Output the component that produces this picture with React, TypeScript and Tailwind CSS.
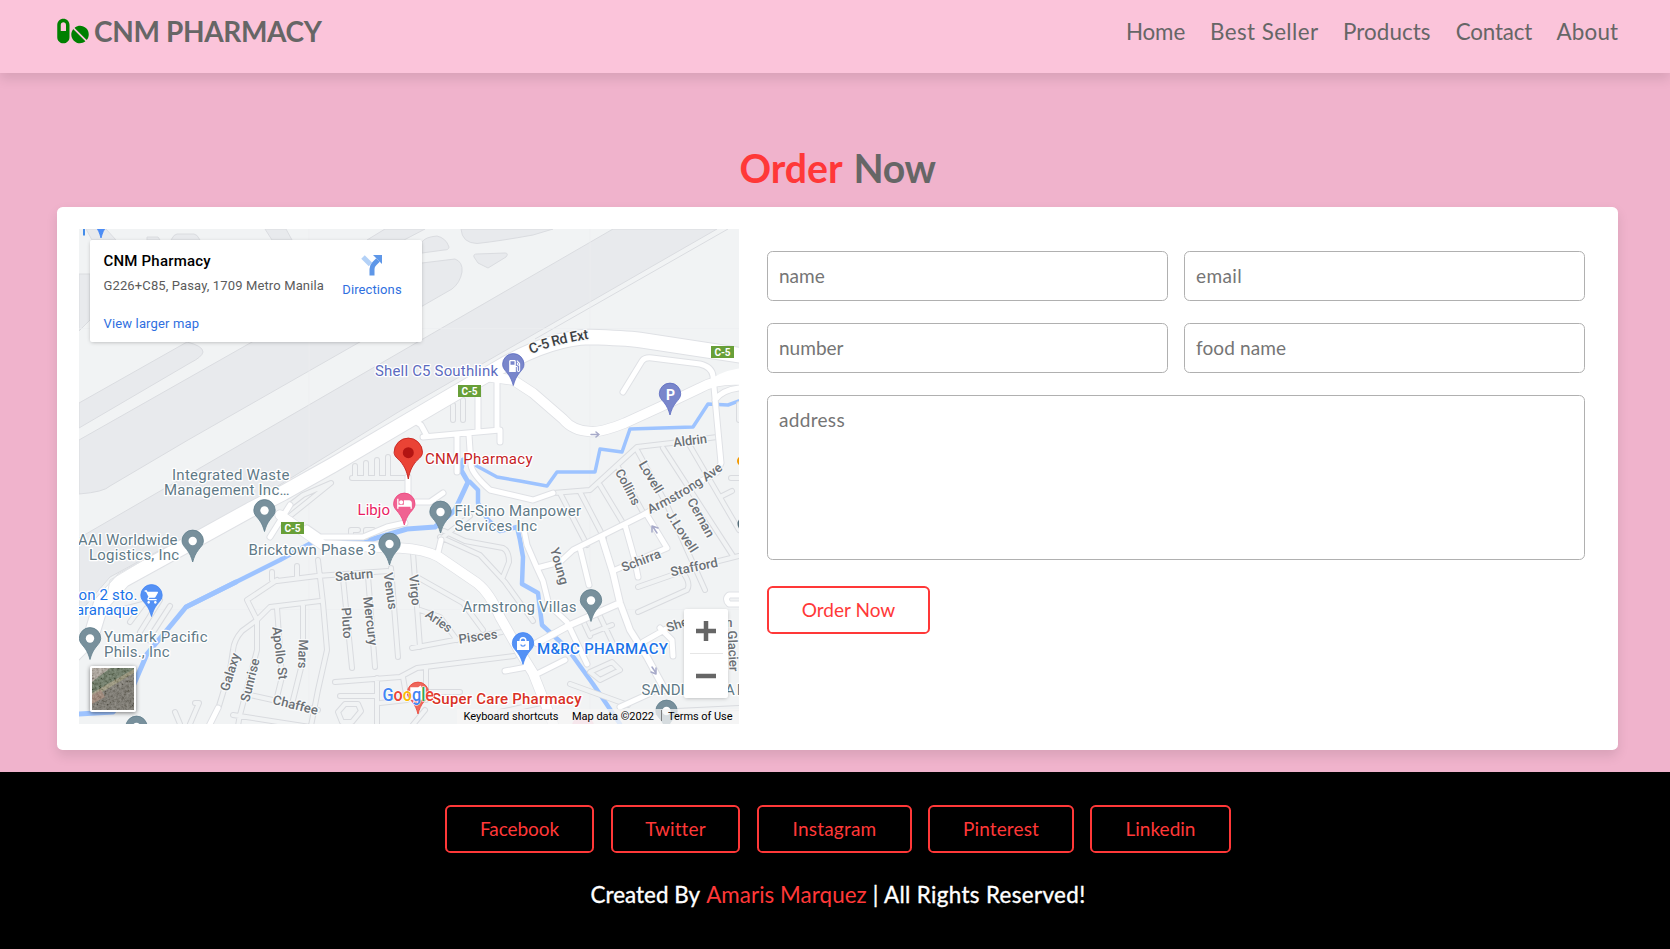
import { FaPills } from "react-icons/fa";
import { MdLocalGasStation, MdShoppingCart, MdHotel } from "react-icons/md";

const NAV = [
  { label: "Home", cls: "w-[61.8px] tracking-[-0.1px]" },
  { label: "Best Seller", cls: "w-[110.6px] tracking-[0.4px]" },
  { label: "Products", cls: "w-[90.2px] tracking-[0.05px]" },
  { label: "Contact", cls: "w-[78.6px] tracking-[-0.15px]" },
  { label: "About", cls: "w-[62.4px] tracking-[0.15px]" },
];

const SOCIAL = [
  { label: "Facebook", cls: "w-[149px] mr-[17px] tracking-[-0.1px]" },
  { label: "Twitter", cls: "w-[129px] mr-[17px] tracking-[0.1px]" },
  { label: "Instagram", cls: "w-[155px] mr-4 tracking-[0.2px]" },
  { label: "Pinterest", cls: "w-[146px] mr-4 tracking-[0.1px]" },
  { label: "Linkedin", cls: "w-[141px]" },
];

/* Zones of the airport */
const AIRPORT = [
  "M79 403 L187 342 Q203 346 203 352 Q202 357 190 363 L79 428Z",
  "M79 440 L252 342 L340 290 L422 263 L455 259 Q463 262 462 272 Q460 283 452 289 L358 343 L188 440 L110 486 Q104 492 79 494Z",
  "M79 538 L613 229 H717 L522 341 L400 411 L247 505 L147 557 L110 577 L79 613Z",
  "M461 229 Q462 243 477 243.500 Q500 241 533 235 L553 229Z",
  "M474 257 Q473 254 477 254 L505 253 Q509 253 506 257 L488 268 L478 263Z",
  "M422 242 Q425 237 437 236 Q446 238 449 247 Q449 250 444 250 L422 253Z",
  "M367 240 L385 229 H425 L404 240Z",
  "M265 229 L272 240 H292 L286 229Z",
  "M79 274 H90 V320 L79 331Z",
  "M147 240 V237 H158 L160 240Z",
  "M171 240 Q174 234 177 234 H194 Q197 234 200 240Z",
  "M86 229 H106 L116 240 H92Z",
];

/* Minor streets */
const STREETS = [
  "M280 558 M277 580 L247 600 L257 620 L242 631 Q234 640 233 650 L230 670 L219 706",
  "M272 580 V572 M297 578 V566 M277 581 L317 576 L388 571",
  "M257 620 L270 607 L320 601 M257 620 V650 L240 715",
  "M318 560 L323 603 L327 650 L318 690 L311 726",
  "M277 608 L282 677 L277 697 M303 604 V660 L293 700",
  "M250 695 L318 710 M233 715 L310 727 M240 714 L238 726",
  "M343 578 L352 668 M368 576 L375 667 M391 568 L398 657",
  "M413 553 L420 647 M412 648 L460 639 L502 632 M420 610 L440 617 L457 640",
  "M417 577 L463 603 L483 630",
  "M335 682 L400 677 L417 668 L514 656 M340 696 H377 M377 678 V726",
  "M403 677 L407 700 L380 703 M426 668 V700 M430 692 H460 M425 710 L412 726",
  "M338 712 L345 704 H358 L361 711 L352 722 H342Z",
  "M440 537 L480 555 L505 582 L533 621 M444 531 L465 541 L503 548 Q509 551 509 562 L503 577",
  "M437 553 L443 537 L470 516",
  "M553 493 L590 490 L637 447 L680 442 L717 437",
  "M560 493 L587 545 M580 492 L604 538 M600 485 L626 528",
  "M618 467 L644 514 M637 450 L667 505 M663 448 L733 556 M690 446 L739 530",
  "M667 505 L705 590 M739 556 L695 567 L638 587",
  "M638 612 L687 590 Q691 584 684 574",
  "M720 497 L732 491 M739 478 H731",
  "M592 633 L612 625 M597 610 L617 652 M583 621 L590 636",
  "M590 672 L612 662 L620 670 L600 680Z M570 684 L628 705",
  "M285 520 L331 483 L303 495 L290 505",
  "M352 478 H404 M355 466 V478 M366 463 V478 M377 460 V478 M388 457 V478",
  "M351 537 V530 H358 M366 537 V530 H373",
  "M453 405 V420 M463 400 V420",
  "M140 632 L160 600 M148 640 L170 606 M130 622 L150 595 M120 610 L158 600",
  "M195 703 H199 L190 724 M175 712 L180 724",
  "M656 712 L739 708 M500 712 L545 702",
  "M739 420 V404",
];

/* Streets filled in white */
const ROADS = [
  "M423 437 L500 430 V442 M478 390 V430 M497 382 V430",
  "M408 416 L421 425 L427 436",
  "M457 435 V472",
  "M307 528 L320 537 H363 L387 527 L405 523",
  "M408 477 V496 M408 502 H430 L443 493",
  "M437 557 L441 540",
  "M469 435 L471 465 Q472 474 490 490 L533 500 L553 493",
  "M623 392 L642 361 Q645 357 652 358 L700 364 Q712 367 713 376 L717 420 L721 463 L717 472",
  "M717 472 L643 515 L573 550 L560 562 L537 568",
  "M523 525 L527 545 L537 568 L543 581 L549 605 L567 622 L587 664",
  "M580 548 L589 585 M625 525 L634 557 L638 577",
  "M615 570 L667 548 L647 515",
  "M643 642 L666 629 M660 628 L672 640 L673 656",
  "M620 707 L653 692 M505 671 L527 667 M537 674 L565 660",
  "M739 595 H729 Q724 599 729 604 H739",
  "M218 708 L208 728",
  "M713 383 L739 374 M715 400 Q722 390 739 388",
  "M290 505 L270 537",
];

const MAIN_ROAD = "M70 658 L91 637 L101 604 L123 580 L183 547 L250 510 L283 493 L333 465 L430 408 L500 367 Q550 338 590 337 Q625 338 640 340 L745 356";
const RAMP = "M490 377 L513 380 L533 393 L563 419 Q573 431 590 431.500 Q600 433 625 423 L660 407 L700 388 Q715 379 739 380";
const SOUTH_ROAD = "M280 515 L323 545 L400 548 Q424 549 439 557 L477 583 Q490 593 500 617 L520 652 L533 673 L554 726";
const EAST_ROAD = "M602 538 L613 573 L620 603 L630 630 L647 657 L665 690 M537 643 L570 625 L620 603";

const RIVERS = [
  { d: "M739 401 L728 405 L708 404 L693 427 L630 429 L622 452 L600 449 L595 472 L557 472 L547 486 L520 481 L497 477 L475 465", w: 3.5 },
  { d: "M463 460 L461 470 L468 482 L455 510 L435 527 L407 529 L373 539 L320 541", w: 5 },
  { d: "M322 537 L280 560 L236 582 L186 607", w: 4.5 },
  { d: "M236 582 L186 607 L167 630 L147 654 L134 684 L113 712 L79 714", w: 5 },
  { d: "M470 482 L478 490 L478 503 L488 520 L500 531 L517 527 L520 540 L523 557 L522 584 L538 593 L542 625 L567 648 L593 684 L620 724", w: 4.5 },
];

type Label = { t: string; x: number; y: number; w: number; c?: string; b?: boolean };
const SLATE = "#5f7a87";
const PLACES: Label[] = [
  { t: "Shell C5 Southlink", x: 375, y: 376, w: 123, c: "#5c6bc0" },
  { t: "CNM Pharmacy", x: 425, y: 464, w: 107.5, c: "#c5221f" },
  { t: "Libjo", x: 357.5, y: 514.5, w: 32.5, c: "#e91e63" },
  { t: "Fil-Sino Manpower", x: 454.5, y: 515.5, w: 126.5 },
  { t: "Services Inc", x: 454.5, y: 531, w: 82.5 },
  { t: "Bricktown Phase 3", x: 248.5, y: 555, w: 127.5 },
  { t: "Integrated Waste", x: 172, y: 480, w: 117.5 },
  { t: "Management Inc…", x: 164, y: 495, w: 125.5 },
  { t: "AAI Worldwide", x: 78, y: 545, w: 99.5 },
  { t: "Logistics, Inc", x: 89, y: 560, w: 90 },
  { t: "on 2 sto.", x: 78.5, y: 600, w: 59, c: "#1a73e8" },
  { t: "aranaque", x: 76, y: 615, w: 62, c: "#1a73e8" },
  { t: "Yumark Pacific", x: 104, y: 642, w: 103.5 },
  { t: "Phils., Inc", x: 104, y: 657, w: 65.5 },
  { t: "Armstrong Villas", x: 462.5, y: 611.5, w: 114 },
  { t: "M&RC PHARMACY", x: 537, y: 654, w: 131, c: "#1a73e8", b: true },
  { t: "Super Care Pharmacy", x: 432, y: 703.5, w: 149.5, c: "#d93025", b: true },
  { t: "SANDI", x: 641.5, y: 695, w: 43 },
  { t: "AR", x: 725, y: 695, w: 21 },
];

const STREET_NAMES = [
  { t: "Aldrin", x: 690, y: 440.5, r: -7, w: 34 },
  { t: "Collins", x: 628, y: 487, r: 62, w: 39 },
  { t: "Lovell", x: 651, y: 477, r: 59, w: 35 },
  { t: "Cernan", x: 701, y: 517.5, r: 61, w: 43 },
  { t: "J.Lovell", x: 682, y: 531.5, r: 57, w: 47 },
  { t: "Schirra", x: 641, y: 560.5, r: -21, w: 41 },
  { t: "Stafford", x: 694, y: 567, r: -12, w: 48 },
  { t: "Young", x: 559.5, y: 566, r: 74, w: 38 },
  { t: "Virgo", x: 415, y: 590, r: 84, w: 31 },
  { t: "Aries", x: 439, y: 621, r: 35, w: 29 },
  { t: "Pisces", x: 478, y: 636.5, r: -8, w: 39 },
  { t: "Venus", x: 390.5, y: 591, r: 82, w: 37 },
  { t: "Mercury", x: 370.5, y: 621, r: 83, w: 49 },
  { t: "Pluto", x: 347, y: 623, r: 86, w: 31 },
  { t: "Saturn", x: 354, y: 575, r: -5, w: 38 },
  { t: "Apollo St", x: 280, y: 653, r: 83, w: 53 },
  { t: "Mars", x: 303, y: 654, r: 92, w: 29 },
  { t: "Galaxy", x: 230, y: 672, r: -73, w: 39 },
  { t: "Sunrise", x: 250, y: 680, r: -76, w: 44 },
  { t: "Chaffee", x: 295.5, y: 705, r: 14, w: 46 },
  { t: "She", x: 677, y: 624.5, r: -18, w: 22 },
  { t: "n", x: 729, y: 622, r: 0, w: 7 },
  { t: "Glacier", x: 733, y: 651, r: 87, w: 41 },
];

function Pin({ x, y, fill, stroke, dot = true }: { x: number; y: number; fill: string; stroke: string; dot?: boolean }) {
  return (
    <g transform={`translate(${x} ${y})`}>
      <path
        d="M0 0 C-1.500 -5 -2.500 -8 -6 -12.500 C-8.500 -15.500 -10.700 -17.500 -10.700 -21.200 A10.700 10.700 0 0 1 10.700 -21.200 C10.700 -17.500 8.500 -15.500 6 -12.500 C2.500 -8 1.500 -5 0 0Z"
        fill={fill}
        stroke={stroke}
        strokeWidth="0.8"
      />
      {dot && <circle cy="-21" r="4.2" fill="#fff" />}
    </g>
  );
}

function Shield({ x, y }: { x: number; y: number }) {
  return (
    <g>
      <rect x={x} y={y} width="23" height="12" fill="#689f38" />
      <text x={x + 11.5} y={y + 9.5} textAnchor="middle" fontSize="10" fontWeight="700" fill="#fff" textLength="16">
        C-5
      </text>
    </g>
  );
}

function MapDrawing() {
  return (
    <svg viewBox="79 229 660 495" className="block h-[495px] w-[660px] font-['Roboto',sans-serif]">
      <rect x="79" y="229" width="660" height="495" fill="#f1f3f4" />
      <g fill="#e8eaed" stroke="#dadce0" strokeWidth="1">
        {AIRPORT.map((d) => <path key={d} d={d} />)}
      </g>
      <path d="M728 229 L535 339" fill="none" stroke="#dadce0" />
      <path d="M79 328.500 H739 M309 229 V724 M590 229 V724 M79 609.500 H739" stroke="#eceef0" strokeWidth="0.6" />
      <g fill="none" strokeLinejoin="round" strokeLinecap="round">
        {RIVERS.map((r) => <path key={r.d} d={r.d} stroke="#9dc3ff" strokeWidth={r.w} />)}
        <path d={STREETS.join(" ")} stroke="#d9dbdf" strokeWidth="6" />
        <path d={STREETS.join(" ")} stroke="#f1f3f4" strokeWidth="4" />
        <path d={ROADS.join(" ")} stroke="#dfe1e5" strokeWidth="7" />
        <path d={SOUTH_ROAD} stroke="#dfe1e5" strokeWidth="11" />
        <path d={EAST_ROAD} stroke="#dfe1e5" strokeWidth="8" />
        <path d={RAMP} stroke="#dfe1e5" strokeWidth="11" />
        <path d={MAIN_ROAD} stroke="#dfe1e5" strokeWidth="16.5" />
        <path d={ROADS.join(" ")} stroke="#fff" strokeWidth="5" />
        <path d={SOUTH_ROAD} stroke="#fff" strokeWidth="9.5" />
        <path d={EAST_ROAD} stroke="#fff" strokeWidth="6" />
        <path d={RAMP} stroke="#fff" strokeWidth="9.5" />
        <path d="M705 386 Q720 374 739 371" stroke="#fff" strokeWidth="5" />
        <path d={MAIN_ROAD} stroke="#fff" strokeWidth="14.5" />
        <path d="M106 600 L110 580 L150 556" stroke="#e3e5e8" strokeWidth="1" />
        <path d="M591 434.500 H599 M596 432 L599 434.500 L596 437 M657 533 L653 527 M652 532 V526 L658 528 M652 667 L656 673 M656 668 V674 L651 672" stroke="#a7aac9" strokeWidth="1.5" />
      </g>

      <g fill="#6b7075" fontSize="13" fontWeight="500" stroke="#f8f9fa" strokeWidth="2.5" strokeLinejoin="round" paintOrder="stroke">
        {STREET_NAMES.map((s) => (
          <text key={s.t} transform={`translate(${s.x} ${s.y}) rotate(${s.r})`} y="4.5" textAnchor="middle" textLength={s.w} lengthAdjust="spacingAndGlyphs">
            {s.t}
          </text>
        ))}
        <path id="ave" d="M650 514 Q694 493 726 467" fill="none" stroke="none" />
        <text><textPath href="#ave" textLength="86">Armstrong Ave</textPath></text>
        <path id="ext" d="M531 354 Q557 343 592 338.500" fill="none" stroke="none" />
        <text fill="#3c4043" fontSize="14"><textPath href="#ext" textLength="60">C-5 Rd Ext</textPath></text>
      </g>

      <Shield x={458} y={385} />
      <Shield x={711} y={346} />
      <Shield x={281} y={522} />

      <Pin x={440.5} y={533} fill="#78909c" stroke="#607d8b" />
      <Pin x={591} y={621.5} fill="#78909c" stroke="#607d8b" />
      <Pin x={264.5} y={531.5} fill="#78909c" stroke="#607d8b" />
      <Pin x={192.7} y={562} fill="#78909c" stroke="#607d8b" />
      <Pin x={90} y={659.5} fill="#78909c" stroke="#607d8b" />
      <Pin x={389.5} y={565} fill="#78909c" stroke="#607d8b" />
      <Pin x={136.5} y={748} fill="#78909c" stroke="#607d8b" />
      <Pin x={666.5} y={732} fill="#78909c" stroke="#607d8b" />
      <Pin x={583} y={748} fill="#f8bbd0" stroke="#f4a9c3" dot={false} />
      <Pin x={101} y={238} fill="#4c8df6" stroke="#4285f4" dot={false} />
      <Pin x={513.3} y={385.5} fill="#7986cb" stroke="#5c6bc0" dot={false} />
      <Pin x={670} y={415} fill="#7986cb" stroke="#5c6bc0" dot={false} />
      <Pin x={151.5} y={616.5} fill="#5491f5" stroke="#4285f4" dot={false} />
      <Pin x={523} y={664.5} fill="#5491f5" stroke="#4285f4" dot={false} />
      <Pin x={404.3} y={525} fill="#f06292" stroke="#ec407a" dot={false} />
      <Pin x={418} y={714} fill="#ee675c" stroke="#ea4335" dot={false} />
      <MdLocalGasStation x="506.5" y="358" width="14" height="14" color="#fff" />
      <MdShoppingCart x="144" y="589" width="15" height="15" color="#fff" />
      <MdHotel x="396.5" y="495.5" width="15.5" height="15.5" color="#fff" />
      <path d="M411 688 H425 V699 H411Z M421 686 L417 689" fill="#fff" stroke="#fff" strokeWidth="1.5" />
      <path d="M517 641 H529 V650 H517Z" fill="#fff" />
      <path d="M520.200 642 V640.500 A2.800 2.800 0 0 1 525.800 640.500 V642" fill="none" stroke="#fff" strokeWidth="1.4" />
      <path d="M520.700 644.500 A2.400 2.400 0 0 0 525.300 644.500" fill="none" stroke="#5491f5" strokeWidth="1.2" />
      <text x="670.5" y="400" textAnchor="middle" fontSize="14" fontWeight="700" fill="#fff">P</text>
      <path d="M84 229 V235.500" stroke="#1a73e8" strokeWidth="1.6" />
      <circle cx="742" cy="461" r="5" fill="#f29900" />
      <circle cx="745" cy="524" r="7.5" fill="#546e7a" />

      <path d="M408.300 479 C406.500 470 404.500 467 401 462 C397 458 394.100 456 394.100 452.300 A14.200 14.200 0 0 1 422.500 452.300 C422.500 456 419.500 458 415.500 462 C412 467 410 470 408.300 479Z" fill="#ea4335" stroke="#c5221f" strokeWidth="0.9" />
      <circle cx="408.3" cy="452.7" r="5.5" fill="#b31412" />

      <g fontSize="15" stroke="#fff" strokeWidth="2.6" strokeLinejoin="round" paintOrder="stroke">
        {PLACES.map((p) => (
          <text key={p.t} x={p.x} y={p.y} textLength={p.w} fill={p.c ?? SLATE} fontWeight={p.b ? 500 : 400}>
            {p.t}
          </text>
        ))}
      </g>
      <text x="382.5" y="700.5" fontSize="18" fontWeight="500" textLength="51.5" stroke="#fff" strokeWidth="1.2" paintOrder="stroke" lengthAdjust="spacingAndGlyphs">
        <tspan fill="#4285f4">G</tspan>
        <tspan fill="#ea4335">o</tspan>
        <tspan fill="#fbbc04">o</tspan>
        <tspan fill="#4285f4">g</tspan>
        <tspan fill="#34a853">l</tspan>
        <tspan fill="#ea4335">e</tspan>
      </text>

      <rect x="457" y="709" width="282" height="15" fill="#f5f5f5" fillOpacity="0.75" />
      <g fontSize="11" fill="#000">
        <text x="463.5" y="719.5" textLength="95">Keyboard shortcuts</text>
        <text x="572" y="719.5" textLength="82">Map data ©2022</text>
        <text x="668" y="719.5" textLength="64.5">Terms of Use</text>
      </g>
      <path d="M661.500 710 V721" stroke="#666" strokeWidth="0.8" />
    </svg>
  );
}

function Thumbnail() {
  return (
    <svg viewBox="0 0 42 42" className="h-[42px] w-[42px]">
      <defs>
        <filter id="grain" x="0" y="0" width="100%" height="100%">
          <feTurbulence type="fractalNoise" baseFrequency="0.4" numOctaves="3" seed="4" />
          <feColorMatrix values="1.4 0 0 0 -0.3  1.4 0 0 0 -0.3  1.4 0 0 0 -0.32  0 0 0 0 0.28" />
        </filter>
      </defs>
      <rect width="42" height="42" fill="#77736a" />
      <path d="M0 0 H24 L0 15Z" fill="#b0a79d" />
      <path d="M0 28 L42 4 V-6 H26 L0 14Z" fill="#5d6d55" />
      <path d="M0 25 L42 1 V5 L0 30Z" fill="#959072" />
      <path d="M0 33 L20 22 L42 14 V42 H0Z" fill="#6f6b62" />
      <path d="M0 27 L9 22 L13 29 L0 36Z" fill="#9a7d6c" />
      <rect width="42" height="42" filter="url(#grain)" />
    </svg>
  );
}

function MapPanel() {
  return (
    <div className="relative h-[495px] w-[660px] shrink-0 overflow-hidden">
      <MapDrawing />

      <div className="absolute left-[11px] top-[11px] flex h-[102px] w-[332px] justify-between rounded-[2px] bg-white pl-[13.5px] pr-[20px] font-['Roboto',sans-serif] shadow-[0_1px_4px_-1px_rgba(0,0,0,0.3)]">
        <div className="pt-[10px]">
          <p className="text-[15px] font-medium leading-[22px] tracking-[0.2px] text-black">CNM Pharmacy</p>
          <p className="mt-1 whitespace-nowrap text-[13px] leading-5 tracking-[0.13px] text-[#5b5b5b]">G226+C85, Pasay, 1709 Metro Manila</p>
          <a className="mt-[18px] block text-[13px] leading-5 tracking-[0.15px] text-[#2f6fe0]">View larger map</a>
        </div>
        <div className="flex w-[60px] flex-col items-center pt-[14px]">
          <svg viewBox="0 0 22 22" className="h-[22px] w-[22px]">
            <path d="M2 3 L9.500 10.500" stroke="#b3d1f7" strokeWidth="5" />
            <path d="M11 21.500 V15 Q11 12 13.500 9.500 L17 6" fill="none" stroke="#5e97e8" strokeWidth="5" />
            <path d="M12 1 H21 V10Z" fill="#5e97e8" />
          </svg>
          <a className="mt-[4px] text-[13px] leading-5 tracking-[0.1px] text-[#2f6fe0]">Directions</a>
        </div>
      </div>

      <div className="absolute bottom-[12px] left-[11px] rounded-[2px] border-2 border-white shadow-[0_1px_4px_rgba(0,0,0,0.5)]">
        <Thumbnail />
      </div>

      <div className="absolute bottom-[26px] right-[11px] flex h-[89px] w-[44px] flex-col items-center rounded-[2px] bg-white shadow-[0_1px_4px_-1px_rgba(0,0,0,0.3)]">
        <div className="flex h-[44px] items-center">
          <svg viewBox="0 0 20 20" className="h-5 w-5"><path d="M0 10 H20 M10 0 V20" stroke="#666" strokeWidth="4.5" /></svg>
        </div>
        <div className="h-px w-[33px] bg-[#e6e6e6]" />
        <div className="flex h-[44px] items-center">
          <svg viewBox="0 0 20 20" className="h-5 w-5"><path d="M0 10 H20" stroke="#666" strokeWidth="4.5" /></svg>
        </div>
      </div>
    </div>
  );
}

const FIELD = "h-[50px] w-[401px] rounded-[5.6px] border border-[#b0b0b0] px-[11px] pb-[2px] text-[19.04px] text-[#666] outline-none placeholder:text-[#757575]";
const BUTTON = "flex h-[48px] items-center justify-center rounded-[5.6px] border-2 border-[#ff3838] text-[19.04px] text-[#ff3838]";

export default function App() {
  return (
    <div className="flex h-[949px] w-[1670px] flex-col overflow-hidden bg-[#f0b3cc] font-['Lato',sans-serif]">
      <header className="relative flex h-[73px] shrink-0 justify-between bg-[#fbc4da] pl-[57px] pr-[51px] shadow-[0_5.600px_11.200px_rgba(0,0,0,0.1)]">
        <a className="flex h-[62px] items-center text-[28px] font-bold tracking-[-0.35px] text-[#666]">
          <FaPills className="mr-[5px] h-[28px] w-[32px] text-[#008000]" />
          CNM PHARMACY
        </a>
        <nav className="flex h-[63px] items-center gap-[22.4px]">
          {NAV.map((n) => (
            <a key={n.label} className={`whitespace-nowrap text-[22.4px] text-[#666] ${n.cls}`}>{n.label}</a>
          ))}
        </nav>
      </header>

      <main className="flex h-[699px] shrink-0 flex-col items-center pl-[5px]">
        <h1 className="mt-[71px] flex h-[48px] items-center gap-[11px] text-[39.2px] font-bold text-[#666]">
          <span className="text-[#ff3838]">Order</span>
          <span className="tracking-[-0.4px]">Now</span>
        </h1>
        <section className="mt-[15px] flex h-[543px] w-[1561px] rounded-[5.6px] bg-white p-[22px] shadow-[0_5.600px_11.200px_rgba(0,0,0,0.1)]">
          <MapPanel />
          <form className="ml-[28px] flex w-[818px] flex-col pt-[22px]">
            <div className="flex gap-4">
              <input className={FIELD} placeholder="name" />
              <input className={`${FIELD} tracking-[0.4px]`} placeholder="email" />
            </div>
            <div className="mt-[22px] flex gap-4">
              <input className={FIELD} placeholder="number" />
              <input className={`${FIELD} tracking-[0.1px]`} placeholder="food name" />
            </div>
            <textarea
              className="mt-[22px] h-[165px] w-[818px] resize-none rounded-[5.6px] border border-[#b0b0b0] px-[11px] py-[11px] text-[19.04px] leading-[26px] tracking-[0.3px] text-[#666] outline-none placeholder:text-[#757575]"
              placeholder="address"
            />
            <button type="button" className={`${BUTTON} mt-[26px] w-[163px]`}>Order Now</button>
          </form>
        </section>
      </main>

      <footer className="flex flex-1 flex-col items-center bg-black pt-[33px]">
        <div className="flex pl-[6px]">
          {SOCIAL.map((s) => (
            <a key={s.label} className={`${BUTTON} ${s.cls}`}>{s.label}</a>
          ))}
        </div>
        <p className="mt-[28px] flex items-center gap-[6px] whitespace-nowrap pl-[6px] text-[22.4px] leading-[28px] text-white">
          <span className="tracking-[0.05px] [-webkit-text-stroke:0.35px_white]">Created By</span>
          <span className="tracking-[0.05px] text-[#ff3838]">Amaris Marquez</span>
          <span className="tracking-[0.35px] [-webkit-text-stroke:0.35px_white]">| All Rights Reserved!</span>
        </p>
      </footer>
    </div>
  );
}
